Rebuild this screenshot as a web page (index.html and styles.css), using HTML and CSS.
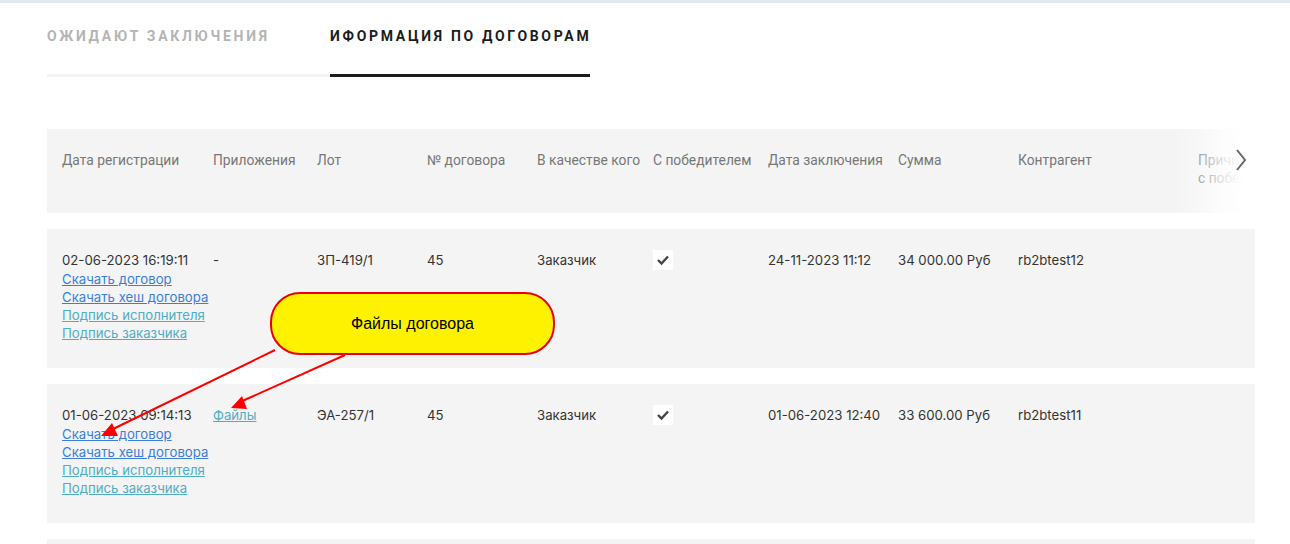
FILE: index.html
```html
<!DOCTYPE html>
<html lang="ru">
<head>
<meta charset="utf-8">
<title>Информация по договорам</title>
<link rel="stylesheet" href="styles.css">
</head>
<body>
<div class="topbar"></div>
<div class="page">
  <nav class="tabs">
    <div class="tab tab-muted">Ожидают заключения</div>
    <div class="tab tab-active">Иформация по договорам</div>
  </nav>

  <div class="table">
    <div class="row head">
      <div>Дата регистрации</div>
      <div>Приложения</div>
      <div>Лот</div>
      <div>№ договора</div>
      <div>В качестве кого</div>
      <div>С победителем</div>
      <div>Дата заключения</div>
      <div>Сумма</div>
      <div>Контрагент</div>
      <div class="last">Причина отказа<br>с победителем</div>
      <div class="fade"></div>
      <svg class="chev" width="12" height="24" viewBox="0 0 12 24"><path d="M2 2 L10 12 L2 22" fill="none" stroke="#666" stroke-width="2"/></svg>
    </div>

    <div class="row body">
      <div>
        <div>02-06-2023 16:19:11</div>
        <a class="lnk first blue" href="#">Скачать договор</a>
        <a class="lnk blue" href="#">Скачать хеш договора</a>
        <a class="lnk teal" href="#">Подпись исполнителя</a>
        <a class="lnk teal" href="#">Подпись заказчика</a>
      </div>
      <div>-</div>
      <div>ЗП-419/1</div>
      <div>45</div>
      <div>Заказчик</div>
      <div><span class="check"><svg width="14" height="12" viewBox="0 0 14 12"><path d="M2 6 L5.5 9.5 L12 2.5" fill="none" stroke="#444" stroke-width="2.4"/></svg></span></div>
      <div>24-11-2023 11:12</div>
      <div>34 000.00 Руб</div>
      <div>rb2btest12</div>
      <div></div>
    </div>

    <div class="row body">
      <div>
        <div>01-06-2023 09:14:13</div>
        <a class="lnk first blue" href="#">Скачать договор</a>
        <a class="lnk blue" href="#">Скачать хеш договора</a>
        <a class="lnk teal" href="#">Подпись исполнителя</a>
        <a class="lnk teal" href="#">Подпись заказчика</a>
      </div>
      <div><a class="teal" href="#">Файлы</a></div>
      <div>ЭА-257/1</div>
      <div>45</div>
      <div>Заказчик</div>
      <div><span class="check"><svg width="14" height="12" viewBox="0 0 14 12"><path d="M2 6 L5.5 9.5 L12 2.5" fill="none" stroke="#444" stroke-width="2.4"/></svg></span></div>
      <div>01-06-2023 12:40</div>
      <div>33 600.00 Руб</div>
      <div>rb2btest11</div>
      <div></div>
    </div>

    <div class="row body"></div>
  </div>
</div>

<div class="callout">Файлы договора</div>
<svg class="arrows" width="1290" height="544" viewBox="0 0 1290 544">
  <line x1="275" y1="350" x2="111" y2="430" stroke="#f00" stroke-width="2"/>
  <polygon points="101,436 112,423 118,436" fill="#f00"/>
  <line x1="345" y1="355" x2="240" y2="402" stroke="#f00" stroke-width="2"/>
  <polygon points="231,408 242,396 247,409" fill="#f00"/>
</svg>
</body>
</html>
```
FILE: styles.css
```css
html, body {
  margin: 0;
  padding: 0;
  background: #fff;
  font-family: Inter, Roboto, "Liberation Sans", sans-serif;
  color: #333;
  overflow: hidden;
}
.topbar {
  height: 3px;
  background: #e3e7ee;
}
.page {
  padding: 0 35px 0 47px;
}
.tabs {
  display: flex;
}
.tab {
  padding: 25px 0 30px;
  line-height: 16px;
  font-family: Roboto, "Liberation Sans", sans-serif;
  font-size: 14px;
  font-weight: 700;
  text-transform: uppercase;
  letter-spacing: 2.7px;
  border-bottom: 3px solid #f3f3f3;
  white-space: nowrap;
}
.tab-muted {
  color: #b4b4b4;
  width: 283px;
}
.tab-active {
  color: #1c1c1c;
  border-bottom-color: #1c1c1c;
  width: 260px;
}
.table {
  margin-top: 52px;
  width: 1208px;
}
.row {
  display: grid;
  grid-template-columns: 151px 104px 110px 110px 116px 115px 130px 120px 180px 1fr;
  padding-left: 15px;
  background: #f4f4f4;
  font-size: 13.2px;
  line-height: 18px;
  overflow: hidden;
}
.head {
  position: relative;
  height: 84px;
  box-sizing: border-box;
  padding-top: 22px;
  color: #777;
  font-family: Roboto, "Liberation Sans", sans-serif;
  font-size: 13.8px;
}
.head > div {
  white-space: nowrap;
}
.head .last {
  max-width: 57px;
  overflow: hidden;
}
.fade {
  position: absolute;
  top: 0;
  right: 0;
  width: 85px;
  height: 100%;
  background: linear-gradient(to right, rgba(255,255,255,0), rgba(255,255,255,0.35) 35%, rgba(255,255,255,0.75) 60%, #fff 85%);
}
.chev {
  position: absolute;
  right: 8px;
  top: 19px;
}
.body {
  margin-top: 16px;
  height: 139px;
  box-sizing: border-box;
  padding-top: 22px;
  color: #333;
}
.lnk {
  display: block;
}
.lnk.first {
  margin-top: 1px;
}
a {
  text-decoration: underline;
}
.blue {
  color: #3a7ed8;
}
.teal {
  color: #4eadc5;
}
.check {
  display: inline-flex;
  align-items: center;
  justify-content: center;
  width: 20px;
  height: 20px;
  background: #fff;
  margin-top: -1px;
}
.callout {
  position: absolute;
  left: 270px;
  top: 292px;
  width: 285px;
  height: 63px;
  box-sizing: border-box;
  border: 2px solid #e8000b;
  border-radius: 30px;
  background: #fff200;
  display: flex;
  align-items: center;
  justify-content: center;
  font-family: "Liberation Sans", Arial, sans-serif;
  font-size: 16px;
  color: #000;
}
.arrows {
  position: absolute;
  left: 0;
  top: 0;
  pointer-events: none;
}
```
